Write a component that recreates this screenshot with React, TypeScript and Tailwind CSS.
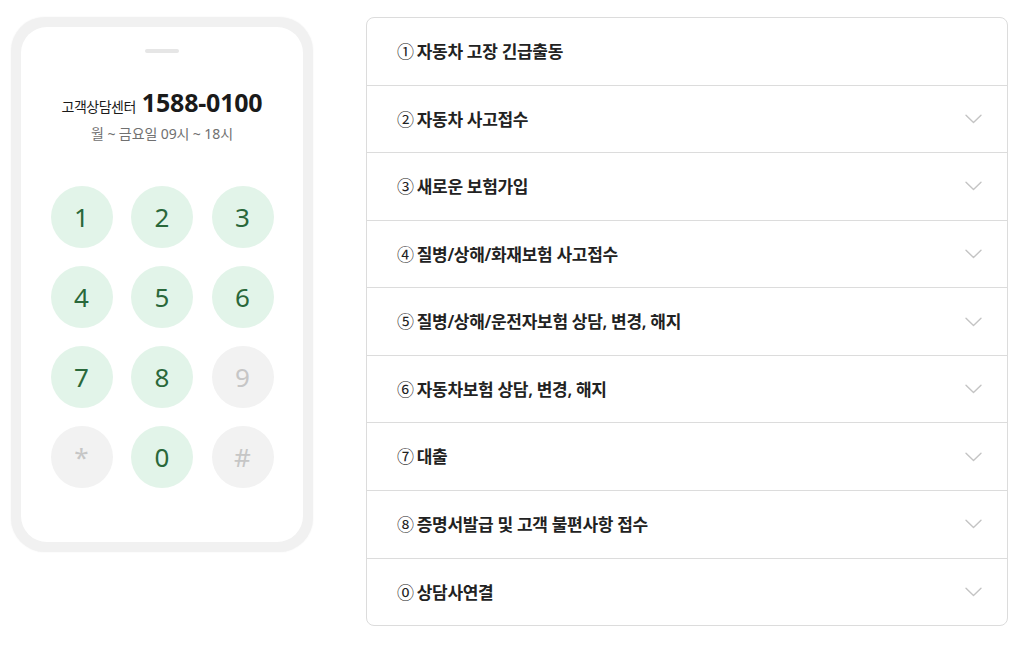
import React from "react";

const KR = { fontFamily: '"Noto Sans", "Noto Sans CJK KR", sans-serif' };
const CJK = { fontFamily: '"Noto Sans CJK KR", sans-serif' };

const keys: { k: string; on: boolean }[] = [
  { k: "1", on: true },
  { k: "2", on: true },
  { k: "3", on: true },
  { k: "4", on: true },
  { k: "5", on: true },
  { k: "6", on: true },
  { k: "7", on: true },
  { k: "8", on: true },
  { k: "9", on: false },
  { k: "*", on: false },
  { k: "0", on: true },
  { k: "#", on: false },
];

const items: [string, string][] = [
  ["①", "자동차 고장 긴급출동"],
  ["②", "자동차 사고접수"],
  ["③", "새로운 보험가입"],
  ["④", "질병/상해/화재보험 사고접수"],
  ["⑤", "질병/상해/운전자보험 상담, 변경, 해지"],
  ["⑥", "자동차보험 상담, 변경, 해지"],
  ["⑦", "대출"],
  ["⑧", "증명서발급 및 고객 불편사항 접수"],
  ["⓪", "상담사연결"],
];

function Chevron() {
  return (
    <svg width="17" height="10" viewBox="0 0 17 10" fill="none">
      <path d="M1 1.2 L8.5 8.5 L16 1.2" stroke="#c4c4c4" strokeWidth="1.4" strokeLinecap="round" strokeLinejoin="round" />
    </svg>
  );
}

export default function App() {
  return (
    <div className="w-[1018px] h-[645px] bg-white flex items-start pt-[17px] pl-[11px] gap-[53px]" style={KR}>
      <div className="w-[302px] h-[535px] rounded-[34px] bg-[#f1f1f1] p-[10px] shadow-[0_0_2px_rgba(0,0,0,0.06)]">
        <div className="h-full rounded-[26px] bg-white flex flex-col items-center">
          <div className="mt-[22px] w-[34px] h-[4px] rounded-full bg-[#e6e6e6]" />
          <div className="mt-[37px] flex items-baseline gap-[6px] text-[#1a1a1a]">
            <span className="text-[14px] tracking-[-0.5px]">고객상담센터</span>
            <span className="text-[25px] font-bold leading-none tracking-[-0.2px]">1588-0100</span>
          </div>
          <div className="mt-[6px] text-[14px] text-[#707070] tracking-[-0.1px]">월 ~ 금요일 09시 ~ 18시</div>
          <div className="mt-[42px] grid grid-cols-[62px_62px_62px] gap-x-[18.5px] gap-y-[18px]">
            {keys.map((x) => (
              <div
                key={x.k}
                className={
                  x.on
                    ? "w-[62px] h-[62px] rounded-full bg-[#e2f4e9] flex items-center justify-center text-[26px] text-[#2a683a]"
                    : "w-[62px] h-[62px] rounded-full bg-[#f2f2f2] flex items-center justify-center text-[26px] text-[#c6c6c6]"
                }
              >
                {x.k}
              </div>
            ))}
          </div>
        </div>
      </div>
      <div className="w-[642px] h-[609px] rounded-[8px] border border-[#dcdcdc] flex flex-col overflow-hidden">
        {items.map(([n, t], i) => (
          <div
            key={t}
            className={
              i === 0
                ? "flex-1 flex items-center justify-between pl-[30px] pr-[25px]"
                : "flex-1 flex items-center justify-between pl-[30px] pr-[25px] border-t border-[#dcdcdc]"
            }
          >
            <span className="text-[17px] font-semibold text-[#222] tracking-[-0.3px]">
              <span className="font-normal mr-[3px]" style={CJK}>{n}</span>
              {t}
            </span>
            {i !== 0 && <Chevron />}
          </div>
        ))}
      </div>
    </div>
  );
}
